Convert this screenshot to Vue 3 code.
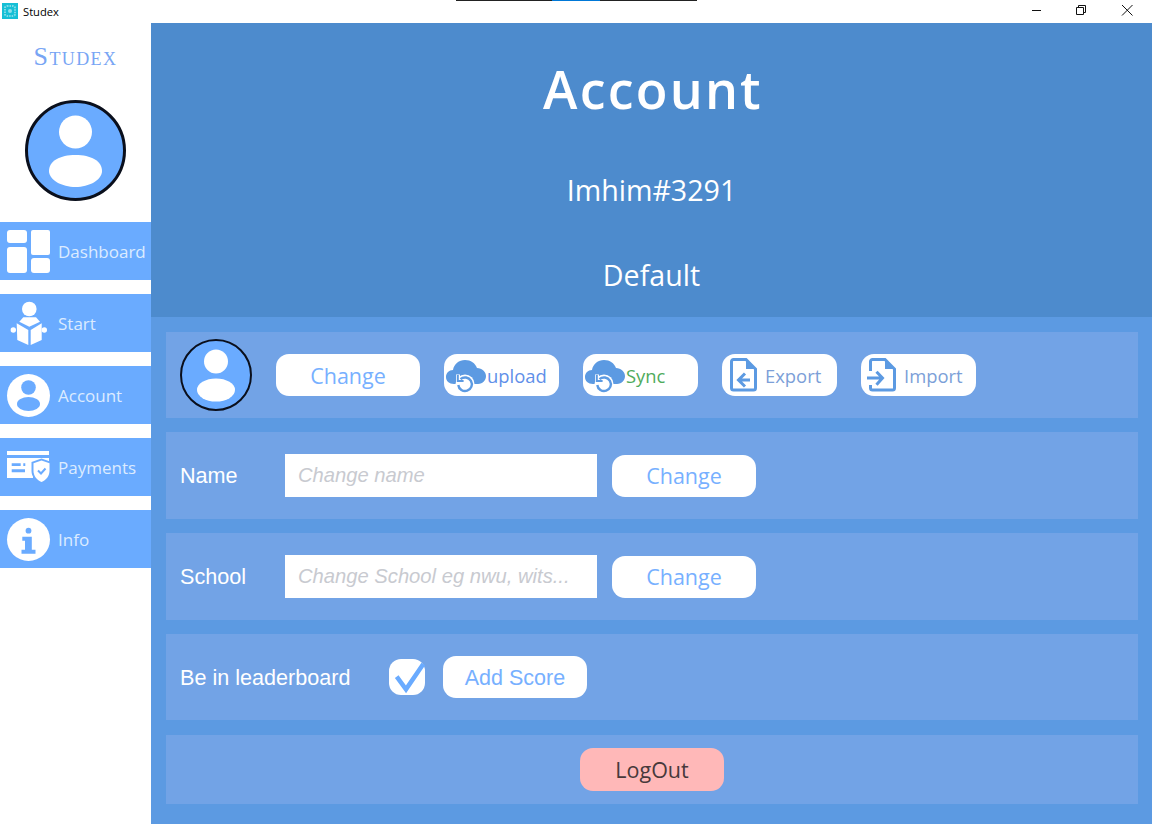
<script setup>
const navItems = [
  { label: 'Dashboard', icon: 'dash' },
  { label: 'Start', icon: 'start' },
  { label: 'Account', icon: 'account' },
  { label: 'Payments', icon: 'pay' },
  { label: 'Info', icon: 'info' }
]
const tools = [
  { label: 'upload', icon: 'cloud', cls: 'upload' },
  { label: 'Sync', icon: 'cloud', cls: 'sync' },
  { label: 'Export', icon: 'export', cls: 'export' },
  { label: 'Import', icon: 'import', cls: 'import' }
]
</script>

<template>
  <div class="window">
    <div class="taskline"><span class="active"></span></div>
    <header class="titlebar">
      <svg class="appicon" viewBox="0 0 16 16">
        <rect width="16" height="16" fill="#16bfd6" />
        <rect x="3" y="3" width="10" height="10" rx="2" fill="none" stroke="#7fdbe6" stroke-width="2" stroke-dasharray="1.5 1" />
        <circle cx="8" cy="8" r="2" fill="#8fe0ea" />
      </svg>
      <span class="apptitle">Studex</span>
      <div class="winctl">
        <svg class="wbtn" viewBox="0 0 46 23"><path d="M20 10.500h9" stroke="#111" fill="none" /></svg>
        <svg class="wbtn" viewBox="0 0 46 23"><path d="M18.500 7.500h7v7h-7zM20.500 7.500V5.500h7v7h-2" stroke="#111" fill="none" /></svg>
        <svg class="wbtn" viewBox="0 0 46 23"><path d="M18 5l10.500 10.500M28.500 5L18 15.500" stroke="#111" fill="none" /></svg>
      </div>
    </header>

    <div class="content">
      <aside class="sidebar">
        <div class="brand">Studex</div>
        <svg class="avatar big" viewBox="0 0 101 101">
          <circle cx="50.500" cy="50.500" r="49" fill="#6aabff" stroke="#0a0f1c" stroke-width="3" />
          <circle cx="50.500" cy="32" r="16.500" fill="#fff" />
          <path d="M24 71c0-10 11-16 26.500-16S77 61 77 71c0 9-13 16-26.500 16S24 80 24 71z" fill="#fff" />
        </svg>
        <nav class="nav">
          <a v-for="item in navItems" :key="item.label" class="navitem">
            <svg class="navicon" viewBox="0 -1 44 44">
              <template v-if="item.icon === 'dash'">
                <rect x="0" y="0" width="20" height="13" rx="3" fill="#fff" />
                <rect x="0" y="17" width="20" height="26" rx="3" fill="#fff" />
                <rect x="24" y="0" width="19" height="25" rx="2" fill="#fff" />
                <rect x="24" y="28" width="19" height="15" rx="3" fill="#fff" />
              </template>
              <template v-else-if="item.icon === 'start'">
                <circle cx="22.300" cy="7" r="7.300" fill="#fff" />
                <path d="M12.300 19.700l4-4.400h12.700l4 4.400-10.700 5z" fill="#fff" />
                <path d="M9.700 21.300l11.600 6.700v15l-11-5zM34.700 21.300l-11 6.700v15l11-5z" fill="#fff" />
                <circle cx="6.300" cy="28" r="2.700" fill="#fff" />
                <circle cx="37.300" cy="28" r="2.700" fill="#fff" />
              </template>
              <template v-else-if="item.icon === 'account'">
                <circle cx="21.500" cy="21.500" r="21.500" fill="#fff" />
                <circle cx="21.500" cy="13.500" r="7.300" fill="#6aabff" />
                <ellipse cx="21.500" cy="30" rx="11.500" ry="7" fill="#6aabff" />
              </template>
              <template v-else-if="item.icon === 'pay'">
                <path d="M0 5h42v4H0zM0 12h42v4H31l-5 2v14H0z" fill="#fff" />
                <path d="M4.700 17.300h9V20h-9zM16.300 17.300h2V20h-2zM4.700 23.300h13.300v3H4.700z" fill="#6aabff" />
                <path d="M34.500 12.500l10 3.500v9c0 6-4.500 10.500-10 13-5.500-2.500-10-7-10-13v-9z" fill="#6aabff" />
                <path d="M34.500 14.500l8 2.800V25c0 5-3.500 9-8 11-4.500-2-8-6-8-11v-7.700z" fill="#fff" />
                <path d="M31 24.500l3 3 4.500-5" fill="none" stroke="#6aabff" stroke-width="2" />
              </template>
              <template v-else>
                <circle cx="21.500" cy="21.500" r="21.500" fill="#fff" />
                <circle cx="21.500" cy="12.700" r="2.900" fill="#6aabff" />
                <path d="M15.300 18.700h9.500v13h3.700v4H14.500v-4h3.500v-9h-2.700z" fill="#6aabff" />
              </template>
            </svg>
            <span>{{ item.label }}</span>
          </a>
        </nav>
      </aside>

      <main class="main">
        <section class="hero">
          <h1>Account</h1>
          <p class="user">Imhim#3291</p>
          <p class="plan">Default</p>
        </section>
        <section class="panels">
          <div class="panel tools">
            <svg class="avatar small" viewBox="0 0 72 72">
              <circle cx="36" cy="36" r="35" fill="#6aabff" stroke="#0a0f1c" stroke-width="2" />
              <circle cx="36" cy="22.500" r="12" fill="#fff" />
              <ellipse cx="36" cy="51" rx="19" ry="11.500" fill="#fff" />
            </svg>
            <button class="btn wide">Change</button>
            <button v-for="tool in tools" :key="tool.label" class="btn tool" :class="tool.cls">
              <svg v-if="tool.icon === 'cloud'" class="tico cloud" viewBox="0 0 40 36">
                <path d="M8 25C3 25 0 22 0 18s3-7 7-7c1-6 6-10 12-10 6 0 10 3 12 8 5 0 9 4 9 8s-3 8-8 8z" fill="#5c9ae2" />
                <circle cx="19" cy="25" r="9.500" fill="#fff" />
                <path d="M10 15.500h4v6h6v3H10z" fill="#fff" />
                <path d="M14.500 20.200A6.800 6.800 0 1 1 12.300 26" fill="none" stroke="#5c9ae2" stroke-width="2.400" />
                <path d="M11.800 16v6h5.800" fill="none" stroke="#5c9ae2" stroke-width="2" />
              </svg>
              <svg v-else-if="tool.icon === 'export'" class="tico doc" viewBox="0 0 30 36">
                <path d="M5.500 2.500H18L27.500 12V31a2 2 0 0 1-2 2H5.500a2 2 0 0 1-2-2V4.500a2 2 0 0 1 2-2z" fill="none" stroke="#5c9ae2" stroke-width="3" />
                <path d="M18 2.500L27.500 12H18z" fill="#5c9ae2" />
                <path d="M22 23H11.500M17 16.500L10.500 23l6.500 6.500" fill="none" stroke="#5c9ae2" stroke-width="3" />
              </svg>
              <svg v-else class="tico doc" viewBox="0 0 30 36">
                <path d="M3.500 14V4.500a2 2 0 0 1 2-2H18L27.500 12V31a2 2 0 0 1-2 2H5.500a2 2 0 0 1-2-2v-3" fill="none" stroke="#5c9ae2" stroke-width="3" />
                <path d="M18 2.500L27.500 12H18z" fill="#5c9ae2" />
                <path d="M0 21h14M9.500 14.700L15.500 21l-6 6.800" fill="none" stroke="#5c9ae2" stroke-width="3" />
              </svg>
              <span>{{ tool.label }}</span>
            </button>
          </div>

          <div class="panel tall">
            <label class="label fixed">Name</label>
            <input class="field" placeholder="Change name" />
            <button class="btn wide">Change</button>
          </div>

          <div class="panel tall">
            <label class="label fixed">School</label>
            <input class="field" placeholder="Change School eg nwu, wits..." />
            <button class="btn wide">Change</button>
          </div>

          <div class="panel board">
            <label class="label lead">Be in leaderboard</label>
            <span class="check">
              <svg viewBox="0 0 36 36"><path d="M7.700 17.700L17 30.300 34.300 5" fill="none" stroke="#6aabff" stroke-width="4.500" /></svg>
            </span>
            <button class="btn wide score">Add Score</button>
          </div>

          <div class="panel logout">
            <button class="btn wide danger">LogOut</button>
          </div>
        </section>
      </main>
    </div>
  </div>
</template>

<style>
html, body { margin: 0; padding: 0; background: #fff; }
</style>

<style scoped>
.window {
  position: relative;
  width: 1152px;
  height: 824px;
  display: flex;
  flex-direction: column;
  overflow: hidden;
  background: #fff;
  font-family: "Open Sans", "Noto Sans", sans-serif;
}
.taskline {
  position: absolute;
  left: 456px;
  top: 0;
  width: 241px;
  height: 1px;
  background: #222;
}
.taskline .active {
  position: absolute;
  left: 96px;
  top: 0;
  width: 48px;
  height: 1px;
  background: #0078d7;
}
.titlebar {
  height: 23px;
  flex: none;
  display: flex;
  align-items: center;
  padding-left: 2px;
}
.appicon { width: 16px; height: 16px; margin-top: -1px; }
.apptitle {
  margin-left: 5px;
  margin-top: -1px;
  font-size: 11.2px;
  color: #000;
}
.winctl { margin-left: auto; display: flex; margin-right: 2px; }
.wbtn { width: 46px; height: 23px; display: block; }
.content { flex: 1; display: flex; min-height: 0; }

.sidebar { width: 151px; flex: none; display: flex; flex-direction: column; align-items: center; }
.brand {
  margin-top: 19px;
  height: 30px;
  line-height: 30px;
  font-family: "Liberation Serif", "DejaVu Serif", serif;
  font-variant: small-caps;
  font-size: 26px;
  letter-spacing: 1.4px;
  color: #78a5f4;
}
.avatar { display: block; flex: none; }
.avatar.big { width: 101px; height: 101px; margin-top: 28px; }
.nav { margin-top: 21px; width: 100%; display: flex; flex-direction: column; gap: 14px; }
.navitem {
  height: 58px;
  display: flex;
  align-items: center;
  padding-left: 7px;
  background: #6aabff;
  color: #dcebff;
  font-size: 17px;
}
.navicon { width: 44px; height: 44px; flex: none; margin-right: 7px; overflow: visible; }

.main { flex: 1; display: flex; flex-direction: column; background: #5c9ae2; min-width: 0; }
.hero {
  height: 294px;
  flex: none;
  background: #4d8bcd;
  color: #fff;
  text-align: center;
}
.hero h1 {
  margin: 31px 0 0;
  padding-left: 3px;
  font-size: 52px;
  line-height: 70px;
  font-weight: 600;
  letter-spacing: 2.2px;
}
.hero p { margin: 0; font-size: 28.6px; line-height: 38px; }
.hero .user { margin-top: 47px; }
.hero .plan { margin-top: 47px; }

.panels { display: flex; flex-direction: column; gap: 14px; padding: 15px 14px 0 15px; }
.panel {
  background: #72a3e6;
  display: flex;
  align-items: center;
  padding-left: 14px;
  flex: none;
}
.tools { height: 86px; }
.tall { height: 87px; }
.board { height: 86px; }
.logout { height: 69px; margin-top: 1px; justify-content: center; padding-left: 0; }
.avatar.small { width: 72px; height: 72px; margin-right: 24px; }

.btn {
  height: 42px;
  padding: 0;
  border: 0;
  border-radius: 13px;
  background: #fff;
  font-family: inherit;
  display: flex;
  align-items: center;
  justify-content: center;
  flex: none;
}
.wide { width: 144px; font-size: 21.5px; color: #77b0ff; }
.tools .btn { margin-right: 24px; }
.tool { width: 115px; font-size: 18.4px; justify-content: flex-start; }
.tico { flex: none; display: block; }
.tico.cloud { width: 40px; height: 36px; margin-left: 2px; margin-right: 1px; margin-top: 3px; }
.tico.doc { width: 30px; height: 36px; margin-left: 6px; margin-right: 7px; }
.upload { color: #5f8fe9; }
.sync { color: #4fab5c; }
.export, .import { color: #7c9fd8; }

.label { color: #fff; font-family: "Liberation Sans", Arial, sans-serif; font-size: 21.6px; }
.lead { padding-top: 1px; }
.fixed { width: 105px; flex: none; }
.field {
  width: 312px;
  height: 43px;
  box-sizing: border-box;
  border: 0;
  outline: 0;
  padding: 0 13px;
  margin-right: 15px;
  background: #fff;
  font-family: "Liberation Sans", Arial, sans-serif;
  font-style: italic;
  font-size: 20.2px;
  color: #333;
}
.field::placeholder { color: #c8cad0; opacity: 1; }
.check {
  width: 36px;
  height: 36px;
  margin-left: 38.5px;
  margin-right: 18px;
  border-radius: 12px;
  background: #fff;
  flex: none;
}
.check svg { display: block; width: 36px; height: 36px; overflow: visible; }
.score { font-family: "Liberation Sans", Arial, sans-serif; padding-top: 3px; }
.danger { background: #ffb8b8; color: #47393b; height: 43px; }
</style>
